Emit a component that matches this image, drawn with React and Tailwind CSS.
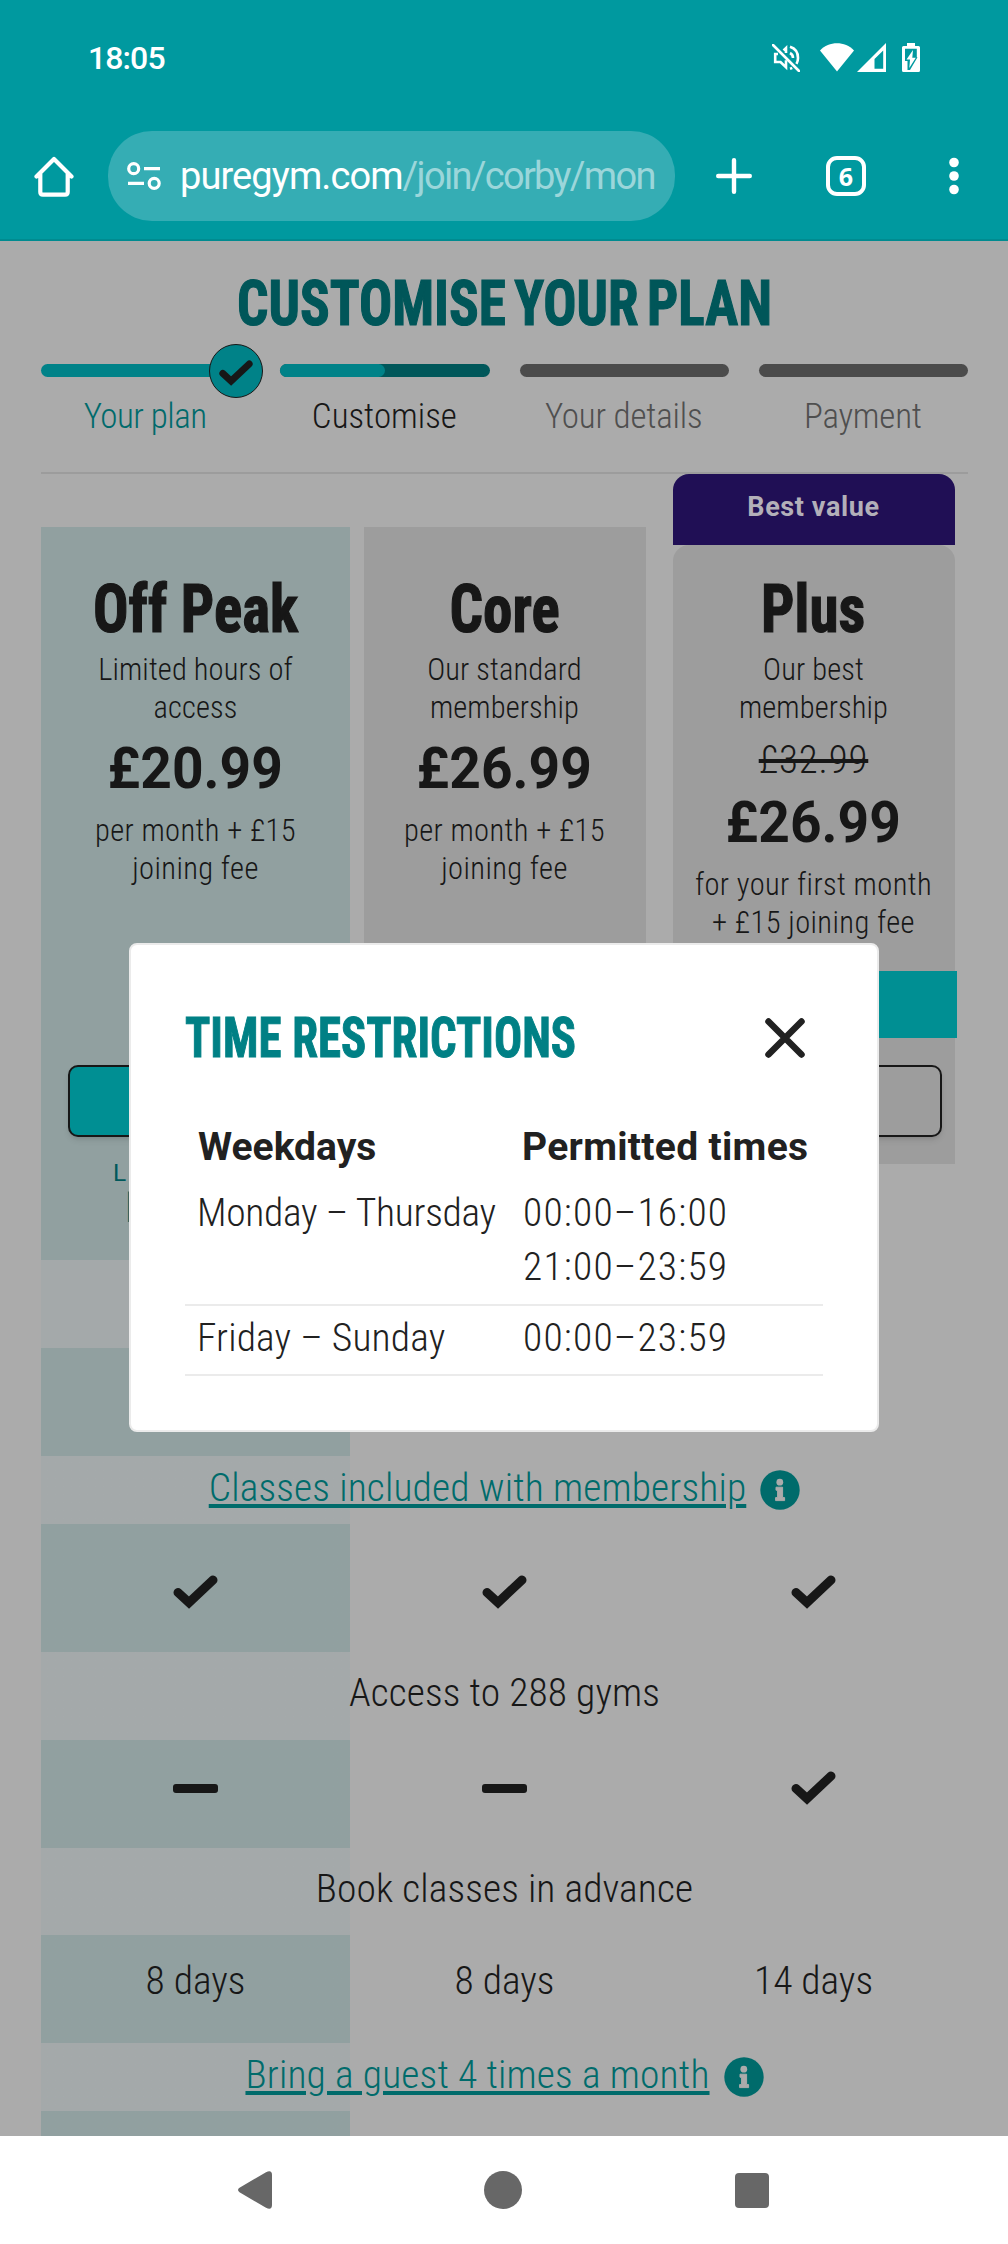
import React from "react";

const steps = [
  { label: "Your plan", state: "done", color: "text-[#006a6b] tracking-[-0.5px]" },
  { label: "Customise", state: "current", color: "text-[#171717]" },
  { label: "Your details", state: "todo", color: "text-[#4f4f4f] tracking-[-0.2px]" },
  { label: "Payment", state: "todo", color: "text-[#4f4f4f] tracking-[-0.2px]" },
];

const features = [
  { label: "Classes included with membership", info: true, values: ["yes", "yes", "yes"], row: "h-[128px] pt-2" },
  { label: "Access to 288 gyms", values: ["no", "no", "yes"], row: "h-[108px] pb-[11px]" },
  { label: "Book classes in advance", values: ["8 days", "8 days", "14 days"], row: "h-[108px] pb-[16px]" },
  { label: "Bring a guest 4 times a month", info: true, values: ["", "", ""], row: "h-[25px]" },
];

function Tick({ className }) {
  return (
    <svg viewBox="0 0 45 34" className={className} fill="none" stroke="#171717" strokeWidth="9" strokeLinecap="round">
      <path d="M5 17.5 16 27.6 40 5" />
    </svg>
  );
}

function InfoIcon() {
  return (
    <svg viewBox="0 0 40 40" className="size-10 shrink-0">
      <circle cx="20" cy="20" r="19.7" fill="#006b6b" />
      <circle cx="19.8" cy="12.2" r="3.4" fill="#ababab" />
      <path d="M16 17.2h6.6v10.4h2v3H15.6v-3h2v-7.4h-1.6z" fill="#ababab" stroke="#ababab" strokeWidth="1" strokeLinejoin="round" />
    </svg>
  );
}

function StatusBar() {
  return (
    <div className="flex h-[115px] items-center pl-[88px] pr-[88px] text-white">
      <span className="font-['Roboto',sans-serif] text-[32px]/8 font-medium tracking-[-0.9px]">18:05</span>
      {/* muted */}
      <svg viewBox="0 0 28 28" className="ml-auto size-7" fill="none" stroke="white" strokeWidth="2.6">
        <path d="M1 1 27 27" strokeLinecap="round" />
        <path d="M6 10H3.200v8h5.300l5.500 5.300v-7M14 9V4l-2.500 2.400" />
        <path d="M18 2.800c5 1.600 8 6 8 11.200 0 2-.5 4-1.500 5.800M18 9c1.800 1 3 2.800 3 5M18 24.800c.8-.3 1.500-.6 2.200-1" />
      </svg>
      <svg viewBox="0 0 34 29" className="ml-5 h-[29px] w-[34px]" fill="white">
        <path d="M0 7.500C9-2.200 25-2.200 34 7.500L17 28.500z" />
      </svg>
      <svg viewBox="0 0 29 29" className="ml-[3px] size-[29px]" fill="white">
        <path fillRule="evenodd" d="M29 0v29H0zM26.200 7.500 17.500 16v9.800h8.700z" />
      </svg>
      <svg viewBox="0 0 18 29" className="ml-4 h-[29px] w-[18px]">
        <path d="M5 0h8v3h3.500q1.500 0 1.500 1.500v23q0 1.500-1.500 1.500h-15Q0 29 0 27.500v-23Q0 3 1.500 3H5z" fill="white" />
        <path d="M3 5.800h11.800v8.500h.7L8 27H5.500v-9H3z" fill="#00999f" />
        <path d="M11 7 4.500 16.500H8L7.300 25l6.500-10.300h-3.500z" fill="white" />
      </svg>
    </div>
  );
}

function AddressBar() {
  return (
    <div className="flex h-[126px] items-center border-b-2 border-[#008b90] pb-[2px] text-white">
      <svg viewBox="0 0 40 41" className="ml-[34px] h-[41px] w-10" fill="none" stroke="white" strokeWidth="4.2" strokeLinecap="round" strokeLinejoin="round">
        <path d="M2.500 20.500 20 3l17.500 17.500M6.300 18v18q0 2.600 2.600 2.600h22.200q2.600 0 2.600-2.600V18" />
      </svg>
      <div className="ml-[34px] flex h-[90px] w-[567px] items-center rounded-[44px] bg-[#35adb4] pl-[19px] pr-[14px]">
        <svg viewBox="0 0 34 28" className="h-7 w-[34px] shrink-0" fill="none" stroke="white" strokeWidth="3.2">
          <circle cx="6.700" cy="6.700" r="5" />
          <circle cx="27.200" cy="21.300" r="5" />
          <path d="M17 6.700h16M1 21.300h16" />
        </svg>
        <div className="ml-[19px] flex-1 whitespace-nowrap font-['Roboto',sans-serif] text-[38px]/[50px] tracking-[-0.9px]">
          puregym.com<span className="tracking-[-1.7px] text-[#9bd6da]">/join/corby/mon</span>
        </div>
      </div>
      <svg viewBox="0 0 36 36" className="ml-[41px] size-9" stroke="white" strokeWidth="4.4" strokeLinecap="round">
        <path d="M18 2.200v31.600M2.200 18h31.600" />
      </svg>
      <div className="ml-[74px] flex size-10 items-center justify-center rounded-[11px] border-[4.5px] border-white font-['Open_Sans',sans-serif] text-[25px]/6 font-bold">
        6
      </div>
      <svg viewBox="0 0 10 38" className="ml-[83px] h-[38px] w-[10px]" fill="white">
        <circle cx="5" cy="5.500" r="4.800" />
        <circle cx="5" cy="19" r="4.800" />
        <circle cx="5" cy="32.500" r="4.800" />
      </svg>
    </div>
  );
}

function Step({ step }) {
  return (
    <li className="flex flex-col items-center">
      <div className={"relative h-[13px] w-full rounded-full " + (step.state === "done" ? "bg-[#008288]" : step.state === "current" ? "bg-[#00575a]" : "bg-[#4b4b4b]")}>
        {step.state === "current" && <div className="h-full w-1/2 rounded-full bg-[#008288]" />}
        {step.state === "done" && (
          <div className="absolute -right-[13px] -top-5 flex size-[54px] items-center justify-center rounded-full border border-[#171717] bg-[#008288]">
            <Tick className="mt-1 h-[26px] w-[34px]" />
          </div>
        )}
      </div>
      <span className={"mt-[19px] -ml-px text-[35px]/[42px] font-light " + step.color}>{step.label}</span>
    </li>
  );
}

function PlanText({ name, about, wasPrice, price, terms }) {
  return (
    <div className="flex flex-col items-center text-center whitespace-nowrap">
      <h2 className="scale-x-[0.88] text-[67px]/[82px] font-bold [-webkit-text-stroke:1.2px_#171717]">{name}</h2>
      <p className="mt-px whitespace-pre-line text-[30.5px]/[38px] font-light tracking-[0.1px]">{about}</p>
      {wasPrice && (
        <p className="h-[54px] pt-[13px] text-[39px]/[41px] font-light tracking-[0.8px] line-through decoration-4">{wasPrice}</p>
      )}
      <p className="scale-x-[0.95] font-['Roboto',sans-serif] text-[58px]/[82px] font-bold">{price}</p>
      <p className="mt-[3px] whitespace-pre-line text-[30.5px]/[38px] font-light tracking-[0.4px]">{terms}</p>
    </div>
  );
}

function Plans() {
  return (
    <div className="grid grid-cols-3 items-start text-[#171717]">
      <div className="mt-[53px] h-[733px] bg-[#91a0a0] pt-[41px]">
        <PlanText name="Off Peak" about={"Limited hours of\naccess"} price="£20.99" terms={"per month + £15\njoining fee"} />
        <div className="mx-[27px] mt-[177px] h-[72px] rounded-[10px] border-2 border-[#171717] bg-[#008f93] shadow-md" />
        <div className="text-[#00585b]">
          <p className="mt-[15px] pl-[72px] font-['Roboto',sans-serif] text-[24.5px]/[41px]">L</p>
          <p className="-mt-[5px] pl-[84px] text-[40px]/[41px] font-light">l</p>
        </div>
      </div>
      <div className="mx-[13.500px] mt-[53px] h-[637px] bg-[#9d9d9d] pt-[41px]">
        <PlanText name="Core" about={"Our standard\nmembership"} price="£26.99" terms={"per month + £15\njoining fee"} />
      </div>
      <div className="mx-[13.500px]">
        <div className="h-[71px] rounded-t-2xl bg-[#200f55] pt-[17px] text-center font-['Roboto',sans-serif] text-[27px]/8 font-bold tracking-[0.6px] text-[#b3b0b9]">
          Best value
        </div>
        <div className="h-[619px] rounded-t-2xl bg-[#9d9d9d] pt-[23px]">
          <PlanText name="Plus" about={"Our best\nmembership"} wasPrice="£32.99" price="£26.99" terms={"for your first month\n+ £15 joining fee"} />
          <div className="-mx-0.5 mt-[29px] h-[67px] bg-[#008f93]" />
          <div className="mx-[13px] mt-[27px] h-[72px] rounded-[10px] border-2 border-[#171717] bg-[#9d9d9d] shadow-md" />
        </div>
      </div>
    </div>
  );
}

function Value({ value }) {
  if (value === "yes") return <Tick className="h-[34px] w-[45px]" />;
  if (value === "no") return <span className="h-[9px] w-[45px] rounded-[3px] bg-[#171717]" />;
  return <span>{value}</span>;
}

function Features() {
  return (
    <div className="text-[39.500px]/[48px] font-light text-[#171717]">
      {/* these two rows sit behind the dialog */}
      <div className="h-[88px] w-[309px] bg-[#a4a9aa]" />
      <div className="h-[108px] w-[309px] bg-[#91a0a0]" />
      {features.map((feature) => (
        <div key={feature.label}>
          <div
            className={
              "flex items-center justify-center bg-linear-to-r from-[#a4a9aa] from-[33.34%] to-transparent to-[33.34%] " +
              (feature.info ? "h-[68px] gap-[14px]" : "h-[87.500px] pb-[5px]")
            }
          >
            {feature.info ? (
              <>
                <span className="-mt-1 tracking-[0.15px] text-[#006b6b] underline decoration-4 underline-offset-[3px]">{feature.label}</span>
                <InfoIcon />
              </>
            ) : (
              <span className="tracking-[0.1px]">{feature.label}</span>
            )}
          </div>
          <div className={"grid grid-cols-3 bg-linear-to-r from-[#91a0a0] from-[33.34%] to-transparent to-[33.34%] " + feature.row}>
            {feature.values.map((value, i) => (
              <div key={i} className="flex items-center justify-center">
                <Value value={value} />
              </div>
            ))}
          </div>
        </div>
      ))}
    </div>
  );
}

function TimeRestrictions() {
  return (
    <div className="absolute left-[129px] top-[943px] h-[489px] w-[750px] rounded-lg border-2 border-[#ebebeb] bg-white px-[54px] text-[#212121]">
      <div className="mt-[53px] flex h-[80px] items-center justify-between pr-[18px]">
        <h2 className="w-[392px] origin-left scale-x-[0.85] whitespace-nowrap text-[55px]/[80px] font-bold text-[#008085] [-webkit-text-stroke:1px_#008085]">
          TIME RESTRICTIONS
        </h2>
        <svg viewBox="0 0 40 40" className="size-10" stroke="#212121" strokeWidth="6.500" strokeLinecap="round">
          <path d="M3.500 3.500 36.500 36.500M36.500 3.500 3.500 36.500" />
        </svg>
      </div>
      <table className="mt-[42px] w-full table-fixed text-left whitespace-nowrap">
        <colgroup>
          <col className="w-[324px]" />
          <col />
        </colgroup>
        <thead>
          <tr className="h-[60px] align-top font-['Roboto',sans-serif] text-[39px]/[54px]">
            <th className="pl-[13px] font-bold">Weekdays</th>
            <th className="pl-[13px] font-bold tracking-[0.3px]">Permitted times</th>
          </tr>
        </thead>
        <tbody className="text-[39.500px]/[54px] font-light">
          <tr className="h-[125px] border-b-2 border-[#ebebeb] align-top">
            <td className="pl-[12px] pt-[6px] tracking-[-0.300px]">Monday – Thursday</td>
            <td className="pl-[14px] pt-[6px] tracking-[1.200px]">
              00:00–16:00
              <br />
              21:00–23:59
            </td>
          </tr>
          <tr className="h-[70px] border-b-2 border-[#ebebeb] align-top">
            <td className="pl-[12px] pt-[5px] tracking-[0.150px]">Friday – Sunday</td>
            <td className="pl-[14px] pt-[5px] tracking-[1.200px]">00:00–23:59</td>
          </tr>
        </tbody>
      </table>
    </div>
  );
}

function NavBar() {
  return (
    <nav className="flex h-[108px] items-center bg-white">
      <svg viewBox="0 0 34 38" className="ml-[238px] h-[38px] w-[34px]" fill="#676767">
        <path d="M1.500 16.800 28 1.200Q34-1.500 34 4v30q0 5.500-6 2.800L1.500 21.200q-3-2.200 0-4.400z" />
      </svg>
      <div className="ml-[212px] size-[38px] rounded-full bg-[#676767]" />
      <div className="ml-[213px] h-[35px] w-[34px] rounded bg-[#676767]" />
    </nav>
  );
}

export default function App() {
  return (
    <div className="relative flex h-[2244px] w-[1008px] flex-col overflow-hidden bg-[#ababab] font-['Roboto_Condensed','Roboto',sans-serif]">
      <header className="h-[241px] shrink-0 bg-[#00999f]">
        <StatusBar />
        <AddressBar />
      </header>
      <main className="h-[1895px] shrink-0 overflow-hidden pl-[41px] pr-[40px]">
        <h1 className="mt-[23px] h-[100px] scale-x-[0.876] text-center text-[63px]/[80px] font-bold whitespace-nowrap text-[#005659] [word-spacing:-5px] [-webkit-text-stroke:1.2px_#005659]">
          CUSTOMISE YOUR PLAN
        </h1>
        <ol className="grid h-[110px] grid-cols-4 gap-[30px] border-b-2 border-[#9c9c9c]">
          {steps.map((step) => (
            <Step key={step.label} step={step} />
          ))}
        </ol>
        <Plans />
        <Features />
      </main>
      <NavBar />
      <TimeRestrictions />
    </div>
  );
}
